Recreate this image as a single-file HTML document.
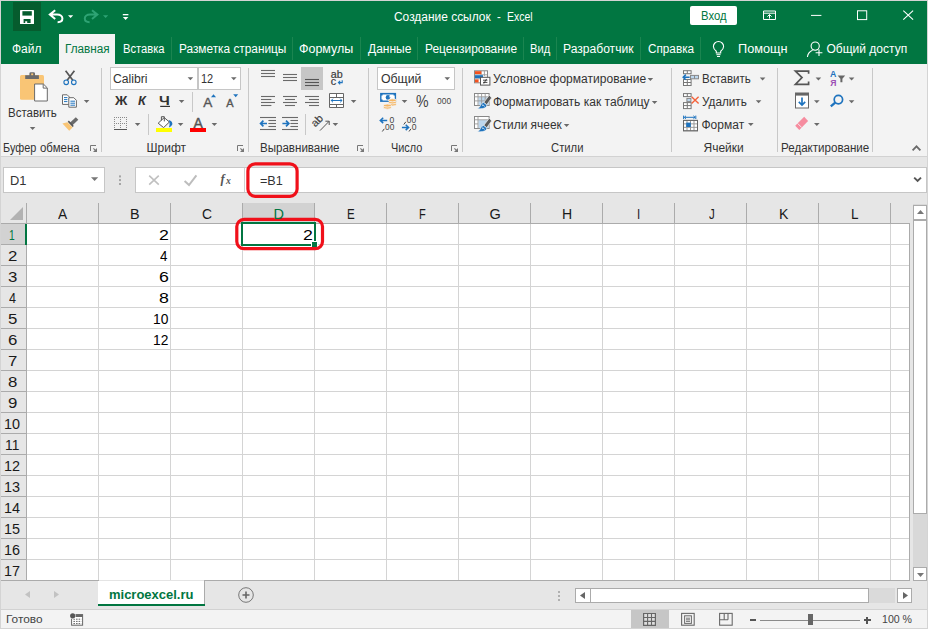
<!DOCTYPE html>
<html lang="ru"><head><meta charset="utf-8"><title>Создание ссылок - Excel</title>
<style>
html,body{margin:0;padding:0}
body{width:928px;height:629px;position:relative;overflow:hidden;background:#e6e6e6;font-family:'Liberation Sans',sans-serif}
div,span,svg{position:absolute;box-sizing:border-box}
span{white-space:pre;line-height:30px;transform-origin:0 0}
svg{overflow:visible}
</style></head>
<body>
<div style="left:0px;top:0px;width:928px;height:629px;background:#d4d4d4;"></div>
<div style="left:1px;top:1px;width:926px;height:627px;background:#e6e6e6;"></div>
<div style="left:1px;top:1px;width:926px;height:63px;background:#017641;"></div>
<div style="left:13px;top:2px;width:28px;height:29px;background:#065c2e;"></div>
<div style="left:59px;top:34px;width:56px;height:30px;background:#f3f3f3;"></div>
<div style="left:1px;top:64px;width:926px;height:92px;background:#f3f3f3;"></div>
<div style="left:1px;top:156px;width:926px;height:1px;background:#d2d2d2;"></div>
<div style="left:171px;top:37px;width:1px;height:23px;background:#1b8550;"></div>
<div style="left:292px;top:37px;width:1px;height:23px;background:#1b8550;"></div>
<div style="left:360px;top:37px;width:1px;height:23px;background:#1b8550;"></div>
<div style="left:417px;top:37px;width:1px;height:23px;background:#1b8550;"></div>
<div style="left:523px;top:37px;width:1px;height:23px;background:#1b8550;"></div>
<div style="left:556px;top:37px;width:1px;height:23px;background:#1b8550;"></div>
<div style="left:640px;top:37px;width:1px;height:23px;background:#1b8550;"></div>
<div style="left:700px;top:37px;width:1px;height:23px;background:#1b8550;"></div>
<div style="left:690px;top:6px;width:47px;height:19px;background:#ffffff;border-radius:2px;"></div>
<div style="left:101px;top:68px;width:1px;height:84px;background:#c8c8c8;"></div>
<div style="left:248px;top:68px;width:1px;height:84px;background:#c8c8c8;"></div>
<div style="left:368px;top:68px;width:1px;height:84px;background:#c8c8c8;"></div>
<div style="left:462px;top:68px;width:1px;height:84px;background:#c8c8c8;"></div>
<div style="left:671px;top:68px;width:1px;height:84px;background:#c8c8c8;"></div>
<div style="left:777px;top:68px;width:1px;height:84px;background:#c8c8c8;"></div>
<div style="left:872px;top:68px;width:1px;height:84px;background:#c8c8c8;"></div>
<div style="left:192px;top:92px;width:1px;height:20px;background:#c8c8c8;"></div>
<div style="left:148px;top:114px;width:1px;height:21px;background:#c8c8c8;"></div>
<div style="left:305px;top:114px;width:1px;height:21px;background:#c8c8c8;"></div>
<div style="left:110px;top:67px;width:88px;height:22.5px;background:#fff;border:1px solid #c6c6c6;"></div>
<div style="left:198px;top:67px;width:43px;height:22.5px;background:#fff;border:1px solid #c6c6c6;border-left:1px solid #c6c6c6;"></div>
<div style="left:377px;top:67px;width:78px;height:22.5px;background:#fff;border:1px solid #c6c6c6;"></div>
<div style="left:301px;top:67px;width:22px;height:22.5px;background:#c6c6c6;"></div>
<div style="left:3px;top:167px;width:102px;height:26px;background:#fff;border:1px solid #c6c6c6;"></div>
<div style="left:135px;top:167px;width:792px;height:26px;background:#fff;border:1px solid #c6c6c6;"></div>
<div style="left:244px;top:168px;width:1px;height:24px;background:#d0d0d0;"></div>
<div style="left:26px;top:224px;width:884px;height:357px;background:#fff;"></div>
<div style="left:243px;top:203px;width:71px;height:20px;background:#d2d2d2;"></div>
<div style="left:1px;top:224px;width:25px;height:20px;background:#d2d2d2;"></div>
<div style="left:98px;top:224px;width:1px;height:357px;background:#d4d4d4;"></div>
<div style="left:170px;top:224px;width:1px;height:357px;background:#d4d4d4;"></div>
<div style="left:242px;top:224px;width:1px;height:357px;background:#d4d4d4;"></div>
<div style="left:314px;top:224px;width:1px;height:357px;background:#d4d4d4;"></div>
<div style="left:386px;top:224px;width:1px;height:357px;background:#d4d4d4;"></div>
<div style="left:458px;top:224px;width:1px;height:357px;background:#d4d4d4;"></div>
<div style="left:530px;top:224px;width:1px;height:357px;background:#d4d4d4;"></div>
<div style="left:602px;top:224px;width:1px;height:357px;background:#d4d4d4;"></div>
<div style="left:674px;top:224px;width:1px;height:357px;background:#d4d4d4;"></div>
<div style="left:746px;top:224px;width:1px;height:357px;background:#d4d4d4;"></div>
<div style="left:818px;top:224px;width:1px;height:357px;background:#d4d4d4;"></div>
<div style="left:890px;top:224px;width:1px;height:357px;background:#d4d4d4;"></div>
<div style="left:27px;top:244px;width:883px;height:1px;background:#d4d4d4;"></div>
<div style="left:27px;top:265px;width:883px;height:1px;background:#d4d4d4;"></div>
<div style="left:27px;top:286px;width:883px;height:1px;background:#d4d4d4;"></div>
<div style="left:27px;top:307px;width:883px;height:1px;background:#d4d4d4;"></div>
<div style="left:27px;top:328px;width:883px;height:1px;background:#d4d4d4;"></div>
<div style="left:27px;top:349px;width:883px;height:1px;background:#d4d4d4;"></div>
<div style="left:27px;top:370px;width:883px;height:1px;background:#d4d4d4;"></div>
<div style="left:27px;top:391px;width:883px;height:1px;background:#d4d4d4;"></div>
<div style="left:27px;top:412px;width:883px;height:1px;background:#d4d4d4;"></div>
<div style="left:27px;top:433px;width:883px;height:1px;background:#d4d4d4;"></div>
<div style="left:27px;top:454px;width:883px;height:1px;background:#d4d4d4;"></div>
<div style="left:27px;top:475px;width:883px;height:1px;background:#d4d4d4;"></div>
<div style="left:27px;top:496px;width:883px;height:1px;background:#d4d4d4;"></div>
<div style="left:27px;top:517px;width:883px;height:1px;background:#d4d4d4;"></div>
<div style="left:27px;top:538px;width:883px;height:1px;background:#d4d4d4;"></div>
<div style="left:27px;top:559px;width:883px;height:1px;background:#d4d4d4;"></div>
<div style="left:26px;top:203px;width:1px;height:20px;background:#ababab;"></div>
<div style="left:98px;top:203px;width:1px;height:20px;background:#ababab;"></div>
<div style="left:170px;top:203px;width:1px;height:20px;background:#ababab;"></div>
<div style="left:242px;top:203px;width:1px;height:20px;background:#ababab;"></div>
<div style="left:314px;top:203px;width:1px;height:20px;background:#ababab;"></div>
<div style="left:386px;top:203px;width:1px;height:20px;background:#ababab;"></div>
<div style="left:458px;top:203px;width:1px;height:20px;background:#ababab;"></div>
<div style="left:530px;top:203px;width:1px;height:20px;background:#ababab;"></div>
<div style="left:602px;top:203px;width:1px;height:20px;background:#ababab;"></div>
<div style="left:674px;top:203px;width:1px;height:20px;background:#ababab;"></div>
<div style="left:746px;top:203px;width:1px;height:20px;background:#ababab;"></div>
<div style="left:818px;top:203px;width:1px;height:20px;background:#ababab;"></div>
<div style="left:890px;top:203px;width:1px;height:20px;background:#ababab;"></div>
<div style="left:1px;top:244px;width:25px;height:1px;background:#ababab;"></div>
<div style="left:1px;top:265px;width:25px;height:1px;background:#ababab;"></div>
<div style="left:1px;top:286px;width:25px;height:1px;background:#ababab;"></div>
<div style="left:1px;top:307px;width:25px;height:1px;background:#ababab;"></div>
<div style="left:1px;top:328px;width:25px;height:1px;background:#ababab;"></div>
<div style="left:1px;top:349px;width:25px;height:1px;background:#ababab;"></div>
<div style="left:1px;top:370px;width:25px;height:1px;background:#ababab;"></div>
<div style="left:1px;top:391px;width:25px;height:1px;background:#ababab;"></div>
<div style="left:1px;top:412px;width:25px;height:1px;background:#ababab;"></div>
<div style="left:1px;top:433px;width:25px;height:1px;background:#ababab;"></div>
<div style="left:1px;top:454px;width:25px;height:1px;background:#ababab;"></div>
<div style="left:1px;top:475px;width:25px;height:1px;background:#ababab;"></div>
<div style="left:1px;top:496px;width:25px;height:1px;background:#ababab;"></div>
<div style="left:1px;top:517px;width:25px;height:1px;background:#ababab;"></div>
<div style="left:1px;top:538px;width:25px;height:1px;background:#ababab;"></div>
<div style="left:1px;top:559px;width:25px;height:1px;background:#ababab;"></div>
<div style="left:1px;top:223px;width:909px;height:1px;background:#ababab;"></div>
<div style="left:26px;top:223px;width:1px;height:358px;background:#ababab;"></div>
<div style="left:909px;top:223px;width:1px;height:358px;background:#ababab;"></div>
<div style="left:1px;top:580px;width:909px;height:1px;background:#ababab;"></div>
<div style="left:99px;top:580px;width:105px;height:1px;background:#e4e4e4;"></div>
<svg style="left:10px;top:207px" width="13" height="13"><path d="M13 0V13H0Z" fill="#b2b2b2"/></svg>
<div style="left:243px;top:222px;width:71px;height:2px;background:#017641;"></div>
<div style="left:25px;top:224px;width:2px;height:21px;background:#017641;"></div>
<div style="left:241px;top:222px;width:75px;height:24px;border:2px solid #017641;"></div>
<div style="left:311px;top:241px;width:7px;height:7px;background:#fff;"></div>
<div style="left:312px;top:242px;width:5px;height:5px;background:#017641;"></div>
<div style="left:913px;top:204px;width:14px;height:377px;background:#d8d8d8;"></div>
<div style="left:913px;top:205px;width:14px;height:15px;background:#fff;border:1px solid #ababab;"></div>
<div style="left:913px;top:220px;width:14px;height:294px;background:#fff;border:1px solid #ababab;"></div>
<div style="left:913px;top:567px;width:14px;height:14px;background:#fff;border:1px solid #ababab;"></div>
<svg style="left:917px;top:210px" width="7" height="4"><path d="M0 4L3.5 0L7 4Z" fill="#777"/></svg>
<svg style="left:917px;top:573px" width="7" height="4"><path d="M0 0L3.5 4L7 0Z" fill="#777"/></svg>
<div style="left:1px;top:581px;width:926px;height:28px;background:#e6e6e6;"></div>
<div style="left:98px;top:581px;width:107px;height:25px;background:#fff;"></div>
<div style="left:98px;top:604px;width:107px;height:2px;background:#017641;"></div>
<div style="left:204px;top:581px;width:1px;height:23px;background:#ababab;"></div>
<div style="left:1px;top:609px;width:926px;height:1px;background:#d2d2d2;"></div>
<svg style="left:25px;top:591px" width="5" height="7"><path d="M5 0V7L0 3.5Z" fill="#c2c2c2"/></svg>
<svg style="left:54px;top:591px" width="5" height="7"><path d="M0 0V7L5 3.5Z" fill="#c2c2c2"/></svg>
<svg style="left:238px;top:587px" width="16" height="16"><circle cx="8" cy="8" r="7.3" fill="none" stroke="#777" stroke-width="1"/><path d="M4.5 8H11.5M8 4.5V11.5" stroke="#666" stroke-width="1.6"/></svg>
<div style="left:558px;top:591px;width:2px;height:2px;background:#b0b0b0;"></div>
<div style="left:558px;top:595px;width:2px;height:2px;background:#b0b0b0;"></div>
<div style="left:558px;top:599px;width:2px;height:2px;background:#b0b0b0;"></div>
<div style="left:575px;top:588px;width:16px;height:15px;background:#fff;border:1px solid #ababab;"></div>
<div style="left:590px;top:588px;width:279px;height:15px;background:#fff;border:1px solid #ababab;"></div>
<div style="left:897px;top:588px;width:15px;height:15px;background:#fff;border:1px solid #ababab;"></div>
<div style="left:869px;top:588px;width:26px;height:15px;background:#dadada;"></div>
<svg style="left:580px;top:592px" width="5" height="7"><path d="M5 0V7L0 3.5Z" fill="#666"/></svg>
<svg style="left:902.5px;top:592px" width="5" height="7"><path d="M0 0V7L5 3.5Z" fill="#666"/></svg>
<div style="left:1px;top:610px;width:926px;height:18px;background:#f3f3f3;"></div>
<div style="left:631px;top:609.5px;width:38px;height:18.5px;background:#c6c6c6;"></div>
<div style="left:760px;top:620px;width:100px;height:1px;background:#8a8a8a;"></div>
<div style="left:808px;top:614px;width:5px;height:11px;background:#666;"></div>
<div style="left:750px;top:619px;width:6px;height:2px;background:#555;"></div>
<div style="left:863.5px;top:619px;width:7px;height:2px;background:#555;"></div>
<div style="left:866px;top:616.5px;width:2px;height:7px;background:#555;"></div>
<svg style="left:0;top:0" width="928" height="629" viewBox="0 0 928 629"><rect x="20" y="10" width="14" height="14" rx="0.6" fill="#fff"/><rect x="22.4" y="11.2" width="9.4" height="4.4" fill="#065c2e"/><path d="M23.6 19H30.6V23H27.2V21.2H25.2V23H23.6Z" fill="#065c2e"/><path d="M55.2 10.2L49.8 14.6L55.2 19 M50 14.6H57 C60.6 14.6 62.4 16.6 62.4 18.6 C62.4 20.6 60.6 22.2 57.6 22.2" fill="none" stroke="#fff" stroke-width="2" stroke-linejoin="miter"/><path d="M68 15.2H73.2L70.6 18Z" fill="#fff"/><path d="M92 10.2L97.4 14.6L92 19 M97.2 14.6H90.2 C86.6 14.6 84.8 16.6 84.8 18.6 C84.8 20.6 86.6 22.2 89.6 22.2" fill="none" stroke="#2ea374" stroke-width="2"/><path d="M103 15.2H108.2L105.6 18Z" fill="#2ea374"/><rect x="122.8" y="14" width="5.6" height="1.3" fill="#fff"/><path d="M122.8 17H128.4L125.6 20Z" fill="#fff"/><path d="M763.5 11H775.5V19.5H763.5Z M763.5 13.2H775.5" fill="none" stroke="#fff" stroke-width="1"/><path d="M769.5 18.6V14.6 M767.4 16.6L769.5 14.5L771.6 16.6" fill="none" stroke="#fff" stroke-width="1"/><rect x="811" y="14.9" width="10.4" height="1" fill="#fff"/><rect x="857.5" y="10.8" width="9.2" height="8.8" fill="none" stroke="#fff" stroke-width="1"/><path d="M903.3 10.6L913.1 19.7 M913.1 10.6L903.3 19.7" stroke="#fff" stroke-width="1.1"/><path d="M716.3 53V51.2C714.6 50 713.4 48.6 713.4 46.6A5.1 5.1 0 0 1 723.6 46.6C723.6 48.6 722.4 50 720.7 51.2V53Z" fill="none" stroke="#fff" stroke-width="1.1"/><path d="M716.4 54.7H720.6 M717 56.5H720" stroke="#fff" stroke-width="1"/><circle cx="815.2" cy="46.1" r="4.1" fill="none" stroke="#fff" stroke-width="1.1"/><path d="M807.4 57C807.8 53.6 809.8 51.4 812.6 50.2" fill="none" stroke="#fff" stroke-width="1.1"/><path d="M815.6 52.7H822.4 M819 49.4V56" stroke="#fff" stroke-width="1.1"/><rect x="20" y="75" width="24" height="24.8" rx="1.5" fill="#f9c575"/><path d="M25.2 79V75.3H29.4V73.6Q29.4 72.2 30.8 72.2H33.6Q35 72.2 35 73.6V75.3H38.9V79Z" fill="#6a6a6a"/><rect x="31.2" y="73.4" width="2" height="1.8" fill="#f9c575"/><path d="M34.6 84H43.4L47.3 87.9V101H34.6Z" fill="#fff" stroke="#6a6a6a" stroke-width="1"/><path d="M43.2 84.2V88.1H47.1" fill="none" stroke="#6a6a6a" stroke-width="1"/><path d="M29.8 127h5.6l-2.8 3z" fill="#6a6a6a"/><path d="M65.6 70.8L73 80.4 M74.4 70.8L67 80.4" stroke="#555" stroke-width="1.7"/><circle cx="66.2" cy="82.3" r="2.3" fill="none" stroke="#1e73be" stroke-width="1.1"/><circle cx="73.8" cy="82.3" r="2.3" fill="none" stroke="#1e73be" stroke-width="1.1"/><path d="M62.5 94.8H67.2L69.4 97V104.4H62.5Z" fill="#fff" stroke="#6a6a6a" stroke-width="1"/><path d="M68.8 97.7H73.8L76.4 100.3V107.2H68.8Z" fill="#fff" stroke="#6a6a6a" stroke-width="1"/><path d="M64 97.6H67.4" stroke="#1e73be" stroke-width="1"/><path d="M64 99.6H67.4" stroke="#1e73be" stroke-width="1"/><path d="M64 101.6H67.4" stroke="#1e73be" stroke-width="1"/><path d="M70.4 101.2H75" stroke="#1e73be" stroke-width="1"/><path d="M70.4 103.2H75" stroke="#1e73be" stroke-width="1"/><path d="M70.4 105.2H75" stroke="#1e73be" stroke-width="1"/><path d="M83.8 100h5.6l-2.8 3z" fill="#6a6a6a"/><path d="M75.8 117.2L78.3 119.7L72.2 125.4L69.6 122.9Z" fill="#6a6a6a"/><path d="M68.9 120.6L73.8 125.9 L72.6 127.1 L67.7 121.8Z" fill="#555"/><path d="M62.4 123.4L67.4 122.2L72.6 127.4L69.2 130.8Z" fill="#f9c575"/><path d="M90.5 151V145.5H96" fill="none" stroke="#777" stroke-width="1"/><path d="M97 148v4h-4z" fill="#777"/><path d="M93.4 148.4l2.6 2.6" stroke="#777" stroke-width="1.1"/><path d="M187.6 77.2h5.6l-2.8 3z" fill="#6a6a6a"/><path d="M231 77.2h5.6l-2.8 3z" fill="#6a6a6a"/><path d="M160.2 106.4H170" stroke="#333" stroke-width="1.2"/><path d="M178.8 100h5.6l-2.8 3z" fill="#6a6a6a"/><text x="203.2" y="106.8" font-size="13.6" fill="#555" stroke="#555" stroke-width="0.35" font-family="Liberation Sans,sans-serif">A</text><path d="M211 97.2h5l-2.5-3z" fill="#1e73be"/><text x="226.2" y="106.8" font-size="11" fill="#555" stroke="#555" stroke-width="0.35" font-family="Liberation Sans,sans-serif">A</text><path d="M233.2 94.2h5l-2.5 3z" fill="#1e73be"/><path d="M114 117.5H127" stroke="#8a8a8a" stroke-width="1" stroke-dasharray="1 1"/><path d="M114 123.5H127" stroke="#8a8a8a" stroke-width="1" stroke-dasharray="1 1"/><path d="M114.5 117V129" stroke="#8a8a8a" stroke-width="1" stroke-dasharray="1 1"/><path d="M120.5 117V129" stroke="#8a8a8a" stroke-width="1" stroke-dasharray="1 1"/><path d="M126.5 117V129" stroke="#8a8a8a" stroke-width="1" stroke-dasharray="1 1"/><path d="M114 129.5H127" stroke="#555" stroke-width="1"/><path d="M134.8 123h5.6l-2.8 3z" fill="#6a6a6a"/><path d="M164.2 117.6L169.4 122L163.6 127.6L158.2 123.2Z" fill="#fff" stroke="#555" stroke-width="1"/><path d="M161.4 120.4V116.7H164.3V121.4" fill="none" stroke="#555" stroke-width="1"/><path d="M168.6 119.9Q173 121.2 172.3 124.6Q171.5 126.9 168.9 127.4Q169.9 125 169.5 123Q169.3 121.4 168.6 119.9Z" fill="#1e73be"/><rect x="156" y="128" width="16" height="4" fill="#ffff00"/><path d="M177.8 123h5.6l-2.8 3z" fill="#6a6a6a"/><text x="193.6" y="127.9" font-size="14" fill="#555" stroke="#555" stroke-width="0.4" font-family="Liberation Sans,sans-serif">A</text><rect x="190" y="128" width="16" height="4" fill="#ff0000"/><path d="M211.6 123h5.6l-2.8 3z" fill="#6a6a6a"/><path d="M237.5 151V145.5H243" fill="none" stroke="#777" stroke-width="1"/><path d="M244 148v4h-4z" fill="#777"/><path d="M240.4 148.4l2.6 2.6" stroke="#777" stroke-width="1.1"/><path d="M261 70.5H275" stroke="#6a6a6a" stroke-width="1.1"/><path d="M261 73.5H275" stroke="#6a6a6a" stroke-width="1.1"/><path d="M261 76.5H275" stroke="#6a6a6a" stroke-width="1.1"/><path d="M283 74.5H297" stroke="#6a6a6a" stroke-width="1.1"/><path d="M283 77.5H297" stroke="#6a6a6a" stroke-width="1.1"/><path d="M283 80.5H297" stroke="#6a6a6a" stroke-width="1.1"/><path d="M305 79.5H319" stroke="#555" stroke-width="1.1"/><path d="M305 82.5H319" stroke="#555" stroke-width="1.1"/><path d="M305 85.5H319" stroke="#555" stroke-width="1.1"/><path d="M261 96.5H275" stroke="#6a6a6a" stroke-width="1.1"/><path d="M283 96.5H297" stroke="#6a6a6a" stroke-width="1.1"/><path d="M305 96.5H319" stroke="#6a6a6a" stroke-width="1.1"/><path d="M261 99.5H271.4" stroke="#6a6a6a" stroke-width="1.1"/><path d="M285 99.5H295" stroke="#6a6a6a" stroke-width="1.1"/><path d="M309 99.5H319" stroke="#6a6a6a" stroke-width="1.1"/><path d="M261 102.5H275" stroke="#6a6a6a" stroke-width="1.1"/><path d="M283 102.5H297" stroke="#6a6a6a" stroke-width="1.1"/><path d="M305 102.5H319" stroke="#6a6a6a" stroke-width="1.1"/><path d="M261 105.5H271.4" stroke="#6a6a6a" stroke-width="1.1"/><path d="M285 105.5H295" stroke="#6a6a6a" stroke-width="1.1"/><path d="M309 105.5H319" stroke="#6a6a6a" stroke-width="1.1"/><text x="330.8" y="77.8" font-size="10.8" fill="#3a3a3a" stroke="#3a3a3a" stroke-width="0.2" font-family="Liberation Sans,sans-serif" textLength="11.9" lengthAdjust="spacingAndGlyphs">ab</text><text x="330.8" y="84.7" font-size="10.8" fill="#3a3a3a" stroke="#3a3a3a" stroke-width="0.2" font-family="Liberation Sans,sans-serif" textLength="5.4" lengthAdjust="spacingAndGlyphs">c</text><path d="M342.2 80.2V82.6H338.6 M340.2 80.8L338.4 82.6L340.2 84.4" fill="none" stroke="#1e73be" stroke-width="1.1"/><path d="M329.5 93.5H343.5V107.5H329.5Z M329.5 97.5H343.5 M329.5 104.5H343.5 M336.5 93.5V97.5 M336.5 104.5V107.5" fill="#fff" stroke="#666" stroke-width="1"/><path d="M331.2 100.5H342 M333 98.7L331.2 100.5L333 102.3 M340.2 98.7L342 100.5L340.2 102.3" fill="none" stroke="#1e73be" stroke-width="1"/><path d="M350.8 100h5.6l-2.8 3z" fill="#6a6a6a"/><path d="M260 117.5H276" stroke="#6a6a6a" stroke-width="1.1"/><path d="M282 117.5H298" stroke="#6a6a6a" stroke-width="1.1"/><path d="M268.4 120.5H276" stroke="#6a6a6a" stroke-width="1.1"/><path d="M290.4 120.5H298" stroke="#6a6a6a" stroke-width="1.1"/><path d="M268.4 123.5H276" stroke="#6a6a6a" stroke-width="1.1"/><path d="M290.4 123.5H298" stroke="#6a6a6a" stroke-width="1.1"/><path d="M268.4 126.5H276" stroke="#6a6a6a" stroke-width="1.1"/><path d="M290.4 126.5H298" stroke="#6a6a6a" stroke-width="1.1"/><path d="M260 129.5H276" stroke="#6a6a6a" stroke-width="1.1"/><path d="M282 129.5H298" stroke="#6a6a6a" stroke-width="1.1"/><path d="M260.6 123.5H267 M263.4 120.7L260.6 123.5L263.4 126.3" fill="none" stroke="#1e73be" stroke-width="1.7"/><path d="M282.4 123.5H288.8 M286 120.7L288.8 123.5L286 126.3" fill="none" stroke="#1e73be" stroke-width="1.7"/><text transform="translate(315.2 127.4) rotate(-45)" font-size="10.8" fill="#444" stroke="#444" stroke-width="0.2" font-family="Liberation Sans,sans-serif">ab</text><path d="M320 130.6L329 121.4 M325.4 121.2H329.2V125" fill="none" stroke="#555" stroke-width="1"/><path d="M332.6 123h5.6l-2.8 3z" fill="#6a6a6a"/><path d="M357.5 151V145.5H363" fill="none" stroke="#777" stroke-width="1"/><path d="M364 148v4h-4z" fill="#777"/><path d="M360.4 148.4l2.6 2.6" stroke="#777" stroke-width="1.1"/><path d="M444.5 77.3h5.6l-2.8 3z" fill="#6a6a6a"/><rect x="380.1" y="92.9" width="16" height="9" fill="#1e73be"/><path d="M382.6 94.4H393.6V95.4H394.7V99.4H393.6V100.4H382.6V99.4H381.5V95.4H382.6Z" fill="#fff"/><circle cx="388" cy="97.4" r="2.3" fill="#1e73be"/><path d="M388.6 97.2L390.6 95.4L390.6 97.2Z" fill="#fff"/><ellipse cx="392.4" cy="104.5" rx="3.9" ry="1.55" fill="#f6b765" stroke="#f3f3f3" stroke-width="0.9"/><ellipse cx="392.4" cy="102.4" rx="3.9" ry="1.55" fill="#f6b765" stroke="#f3f3f3" stroke-width="0.9"/><ellipse cx="392.4" cy="100.3" rx="3.9" ry="1.55" fill="#f6b765" stroke="#f3f3f3" stroke-width="0.9"/><ellipse cx="387.4" cy="107.6" rx="3.9" ry="1.55" fill="#f6b765" stroke="#f3f3f3" stroke-width="0.9"/><ellipse cx="387.4" cy="105.5" rx="3.9" ry="1.55" fill="#f6b765" stroke="#f3f3f3" stroke-width="0.9"/><path d="M401.7 100h5.6l-2.8 3z" fill="#6a6a6a"/><text x="389.6" y="122.9" font-size="8.6" font-family="Liberation Sans,sans-serif" fill="#444">0</text><text x="385" y="130" font-size="8.6" font-family="Liberation Sans,sans-serif" fill="#444" textLength="9.3" lengthAdjust="spacingAndGlyphs">00</text><path d="M384.3 128.8L382.3 131.5" stroke="#444" stroke-width="1"/><path d="M380.3 120.4H387.2 M383.2 117.7L380.3 120.4L383.2 123.1" fill="none" stroke="#1e73be" stroke-width="1.5"/><text x="406.8" y="122.9" font-size="8.6" font-family="Liberation Sans,sans-serif" fill="#444" textLength="9.3" lengthAdjust="spacingAndGlyphs">00</text><path d="M405.8 121.8L403.8 124.5" stroke="#444" stroke-width="1"/><text x="411.8" y="130" font-size="8.6" font-family="Liberation Sans,sans-serif" fill="#444">0</text><path d="M411 128.8L409 131.5" stroke="#444" stroke-width="1"/><path d="M401.9 127.4H408.6 M405.7 124.7L408.6 127.4L405.7 130.1" fill="none" stroke="#1e73be" stroke-width="1.5"/><path d="M451.5 151V145.5H457" fill="none" stroke="#777" stroke-width="1"/><path d="M458 148v4h-4z" fill="#777"/><path d="M454.4 148.4l2.6 2.6" stroke="#777" stroke-width="1.1"/><rect x="474.5" y="70.8" width="13" height="12" fill="#fff" stroke="#888" stroke-width="1"/><path d="M481 70.8V82.8 M484.4 70.8V76 M474.5 74.8H487.5 M474.5 78.8H481" stroke="#999" stroke-width="0.9" fill="none"/><rect x="475" y="71.2" width="6.4" height="2.8" fill="#f4511e"/><rect x="475" y="75.2" width="8" height="3" fill="#1e73be"/><rect x="475" y="79.4" width="3.6" height="3" fill="#f4511e"/><rect x="480.5" y="77.3" width="9.4" height="7.8" fill="#fff" stroke="#555" stroke-width="1"/><path d="M483 80.2H487.4 M483 82.4H487.4 M486.6 78.9L483.8 83.6" stroke="#333" stroke-width="0.9"/><rect x="474.5" y="93.5" width="14.6" height="12" fill="#fff" stroke="#888" stroke-width="1"/><rect x="478.4" y="97.1" width="10.2" height="8" fill="#bdd7ee"/><path d="M478 93.5V105.5 M481.6 93.5V105.5 M485.2 93.5V105.5 M474.5 96.8H489 M474.5 100.9H489" stroke="#999" stroke-width="0.9"/><path d="M489.4 95.1L491.6 97.9L486.8 104.7L483.8 102.3Z" fill="#5a5a5a" stroke="#f3f3f3" stroke-width="0.7"/><path d="M483.6 102.5L486.8 105.1Q486.6 108.1 482.4 108.5Q479.6 108.9 477.6 108.8Q480.2 106.9 480.8 104.9Q481.6 102.9 483.6 102.5Z" fill="#1e73be" stroke="#f3f3f3" stroke-width="0.6"/><path d="M482 105.1Q483.6 104.9 484.6 106.3" fill="none" stroke="#fff" stroke-width="0.9"/><rect x="474.5" y="116.5" width="14.6" height="12" fill="#fff" stroke="#888" stroke-width="1"/><rect x="478.4" y="120.1" width="10.2" height="8" fill="#bdd7ee"/><path d="M478 116.5V128.5 M474.5 119.8H489 M474.5 123.9H478" stroke="#999" stroke-width="0.9"/><path d="M489.4 118.1L491.6 120.9L486.8 127.7L483.8 125.3Z" fill="#5a5a5a" stroke="#f3f3f3" stroke-width="0.7"/><path d="M483.6 125.5L486.8 128.1Q486.6 131.1 482.4 131.5Q479.6 131.9 477.6 131.8Q480.2 129.9 480.8 127.9Q481.6 125.9 483.6 125.5Z" fill="#1e73be" stroke="#f3f3f3" stroke-width="0.6"/><path d="M482 128.1Q483.6 127.9 484.6 129.3" fill="none" stroke="#fff" stroke-width="0.9"/><path d="M647.6 78h5.6l-2.8 3z" fill="#6a6a6a"/><path d="M651.8 101h5.6l-2.8 3z" fill="#6a6a6a"/><path d="M563.8 124h5.6l-2.8 3z" fill="#6a6a6a"/><rect x="683.5" y="70.7" width="7.6" height="3" fill="#fff" stroke="#777" stroke-width="1"/><path d="M687.3 70.7V73.7" stroke="#777" stroke-width="1"/><rect x="683.5" y="79.5" width="7.6" height="6" fill="#fff" stroke="#777" stroke-width="1"/><path d="M687.3 79.5V85.5" stroke="#777" stroke-width="1"/><path d="M683.5 82.5H691.1" stroke="#777" stroke-width="1"/><rect x="690.5" y="75.4" width="8" height="3.4" fill="#bdd7ee" stroke="#888" stroke-width="1"/><path d="M694.5 75.4V78.8" stroke="#888" stroke-width="1"/><path d="M683.2 77.2H689.6 M685.8 74.6L683.2 77.2L685.8 79.8" fill="none" stroke="#1e73be" stroke-width="1.5"/><path d="M759.8 77.4h5.6l-2.8 3z" fill="#6a6a6a"/><rect x="683.5" y="93.6" width="7.6" height="3" fill="#fff" stroke="#777" stroke-width="1"/><path d="M687.3 93.6V96.6" stroke="#777" stroke-width="1"/><rect x="683.5" y="102.6" width="7.6" height="6" fill="#fff" stroke="#777" stroke-width="1"/><path d="M687.3 102.6V108.6" stroke="#777" stroke-width="1"/><path d="M683.5 105.6H691.1" stroke="#777" stroke-width="1"/><rect x="686.9" y="98.4" width="4" height="3.2" fill="#bdd7ee" stroke="#888" stroke-width="1"/><path d="M691.6 96.8L698.6 103.4 M698.6 96.8L691.6 103.4" stroke="#f4623a" stroke-width="1.4"/><path d="M755.8 100.2h5.6l-2.8 3z" fill="#6a6a6a"/><path d="M683.6 115.6V119 M695.8 115.6V119 M684.4 117.3H695 M686 115.8L684.4 117.3L686 118.8 M693.4 115.8L695 117.3L693.4 118.8" fill="none" stroke="#1e73be" stroke-width="1"/><rect x="683.5" y="120.4" width="14" height="10.4" fill="#fff" stroke="#999" stroke-width="1"/><path d="M687 120.4V130.8" stroke="#999" stroke-width="1"/><path d="M690.5 120.4V130.8" stroke="#999" stroke-width="1"/><path d="M694 120.4V130.8" stroke="#999" stroke-width="1"/><path d="M683.5 123.867H697.5" stroke="#999" stroke-width="1"/><path d="M683.5 127.333H697.5" stroke="#999" stroke-width="1"/><rect x="683.5" y="120.4" width="14" height="10.4" fill="none" stroke="#666" stroke-width="1"/><rect x="686.2" y="122.6" width="4.6" height="4.4" fill="#1e73be"/><path d="M748 123h5.6l-2.8 3z" fill="#6a6a6a"/><path d="M808.6 73.8V71.1H795.4L802 77.6L795.4 84.3H808.6V81.6" fill="none" stroke="#555" stroke-width="1.7" stroke-linejoin="miter"/><path d="M815.6 77.4h5.6l-2.8 3z" fill="#6a6a6a"/><rect x="795.5" y="93" width="13" height="15" fill="#fff" stroke="#666" stroke-width="1"/><rect x="795.5" y="93" width="13" height="2.6" fill="#666"/><path d="M802 97.6V105 M798.8 101.8L802 105L805.2 101.8" fill="none" stroke="#1e73be" stroke-width="1.7"/><path d="M814 100.2h5.6l-2.8 3z" fill="#6a6a6a"/><path d="M804.2 116.8L808.1 121.1L799.3 129.9L795.2 125.8Z" fill="#f68c9f"/><path d="M797.5 123.3L801.7 127.5" stroke="#f3f3f3" stroke-width="0.9"/><path d="M814 123h5.6l-2.8 3z" fill="#6a6a6a"/><text x="830" y="76.6" font-size="8.8" font-weight="bold" fill="#1e73be" font-family="Liberation Sans,sans-serif">A</text><text x="830.2" y="85.8" font-size="8.6" font-weight="bold" fill="#9b4fb5" font-family="Liberation Sans,sans-serif">Я</text><path d="M837.6 75.6H845.2L842.4 78.8V82.2H840.4V78.8Z" fill="#666"/><path d="M848.8 77.4h5.6l-2.8 3z" fill="#6a6a6a"/><circle cx="838.4" cy="99.6" r="4.2" fill="none" stroke="#1e73be" stroke-width="1.7"/><path d="M835.2 102.6L830.8 106.4" stroke="#1e73be" stroke-width="2.3"/><path d="M848.8 100.2h5.6l-2.8 3z" fill="#6a6a6a"/><path d="M912.6 150.4L916.5 146.4L920.4 150.4" fill="none" stroke="#6a6a6a" stroke-width="1.8"/><path d="M91 177.2h7.2l-3.6 3.7z" fill="#777"/><rect x="119" y="175.4" width="2" height="2" fill="#a6a6a6"/><rect x="119" y="179.1" width="2" height="2" fill="#a6a6a6"/><rect x="119" y="183" width="2" height="2" fill="#a6a6a6"/><path d="M149.2 175.6L158.8 184.6 M158.8 175.6L149.2 184.6" stroke="#c0c0c0" stroke-width="1.6"/><path d="M184.6 181L189 185L196.4 175.4" fill="none" stroke="#bdbdbd" stroke-width="2"/><text x="220.4" y="183.2" font-size="12.6" font-style="italic" font-weight="bold" fill="#555" font-family="Liberation Serif,serif">f</text><text x="226" y="183.6" font-size="9.6" font-style="italic" font-weight="bold" fill="#555" font-family="Liberation Serif,serif">x</text><path d="M914.2 177.6L917.6 181L921 177.6" fill="none" stroke="#555" stroke-width="1.9"/><rect x="71.6" y="614.6" width="11" height="10.6" fill="#fff" stroke="#666" stroke-width="1"/><rect x="71.6" y="614.6" width="11" height="2.4" fill="#666"/><path d="M73.4 619.2H81.4" stroke="#666" stroke-width="1" stroke-dasharray="1.6 1"/><path d="M73.4 621.4H81.4" stroke="#666" stroke-width="1" stroke-dasharray="1.6 1"/><path d="M73.4 623.6H81.4" stroke="#666" stroke-width="1" stroke-dasharray="1.6 1"/><circle cx="72.7" cy="615.8" r="3.1" fill="#f3f3f3"/><circle cx="72.7" cy="615.8" r="2.6" fill="#555"/><path d="M643.6 613.5H655.4V625.4H643.6Z" fill="#dedede" stroke="#666" stroke-width="1.2"/><path d="M647.6 613.5V625.4 M651.5 613.5V625.4 M643.6 617.5H655.4 M643.6 621.4H655.4" fill="none" stroke="#666" stroke-width="1.1"/><rect x="681.6" y="613.4" width="12.6" height="11.8" fill="none" stroke="#6a6a6a" stroke-width="1.1"/><rect x="684.6" y="615.8" width="6.8" height="7.6" fill="none" stroke="#6a6a6a" stroke-width="1"/><path d="M686 618.2H690 M686 619.8H690 M686 621.4H690" stroke="#6a6a6a" stroke-width="0.9"/><rect x="719.6" y="613.4" width="12.6" height="11.8" fill="none" stroke="#6a6a6a" stroke-width="1.1"/><path d="M724.2 613.4V619.8 M728 613.4V619.8 M719.6 619.8H728" fill="none" stroke="#6a6a6a" stroke-width="1.1"/><rect x="247.9" y="163.8" width="49.2" height="32.5" rx="7.2" fill="none" stroke="#f0101a" stroke-width="3.2"/><rect x="236.8" y="219.4" width="85.7" height="29.3" rx="7.2" fill="none" stroke="#f0101a" stroke-width="3.2"/></svg>
<span style="left:393.61px;top:2.00px;font-size:12px;color:#ffffff;transform:scaleX(0.9948);">Создание ссылок</span>
<span style="left:496.60px;top:2.00px;font-size:12px;color:#ffffff;transform:scaleX(0.9500);">-</span>
<span style="left:507.23px;top:2.00px;font-size:12px;color:#ffffff;transform:scaleX(0.8714);">Excel</span>
<span style="left:700.66px;top:1.00px;font-size:12px;color:#017641;transform:scaleX(0.9385);">Вход</span>
<span style="left:12.00px;top:34.00px;font-size:12px;color:#ffffff;transform:scaleX(1.0000);">Файл</span>
<span style="left:65.02px;top:34.00px;font-size:12px;color:#017641;transform:scaleX(0.9773);">Главная</span>
<span style="left:123.07px;top:34.00px;font-size:12px;color:#ffffff;transform:scaleX(0.9318);">Вставка</span>
<span style="left:179.01px;top:34.00px;font-size:12px;color:#ffffff;transform:scaleX(0.9860);">Разметка страницы</span>
<span style="left:299.46px;top:34.00px;font-size:12px;color:#ffffff;transform:scaleX(1.0392);">Формулы</span>
<span style="left:368.00px;top:34.00px;font-size:12px;color:#ffffff;transform:scaleX(1.0000);">Данные</span>
<span style="left:424.51px;top:34.00px;font-size:12px;color:#ffffff;transform:scaleX(0.9945);">Рецензирование</span>
<span style="left:529.57px;top:34.00px;font-size:12px;color:#ffffff;transform:scaleX(0.9286);">Вид</span>
<span style="left:563.49px;top:34.00px;font-size:12px;color:#ffffff;transform:scaleX(1.0072);">Разработчик</span>
<span style="left:647.52px;top:34.00px;font-size:12px;color:#ffffff;transform:scaleX(0.9783);">Справка</span>
<span style="left:738.24px;top:34.00px;font-size:12px;color:#ffffff;transform:scaleX(1.0600);">Помощн</span>
<span style="left:826.50px;top:34.00px;font-size:12px;color:#ffffff;transform:scaleX(1.0000);">Общий доступ</span>
<span style="left:7.64px;top:98.00px;font-size:12px;color:#333333;transform:scaleX(0.9592);">Вставить</span>
<span style="left:2.69px;top:133.00px;font-size:12px;color:#333333;transform:scaleX(0.9057);">Буфер</span>
<span style="left:40.30px;top:133.00px;font-size:12px;color:#333333;transform:scaleX(0.9537);">обмена</span>
<span style="left:112.98px;top:64.00px;font-size:12px;color:#333333;transform:scaleX(1.0156);">Calibri</span>
<span style="left:201.08px;top:64.00px;font-size:12px;color:#333333;transform:scaleX(0.9167);">12</span>
<span style="left:115.00px;top:86.00px;font-size:12px;color:#333333;font-weight:bold;transform:scaleX(1.1364);">Ж</span>
<span style="left:138.00px;top:86.00px;font-size:12px;color:#333333;font-weight:bold;font-style:italic;transform:scaleX(1.0625);">К</span>
<span style="left:159.11px;top:86.00px;font-size:12px;color:#333333;font-weight:bold;transform:scaleX(1.2857);">Ч</span>
<span style="left:146.50px;top:133.00px;font-size:12px;color:#333333;transform:scaleX(1.0000);">Шрифт</span>
<span style="left:260.04px;top:133.00px;font-size:12px;color:#333333;transform:scaleX(0.9630);">Выравнивание</span>
<span style="left:381.00px;top:64.00px;font-size:12px;color:#333333;transform:scaleX(1.0256);">Общий</span>
<span style="left:415.69px;top:87.00px;font-size:15.6px;color:#444;transform:scaleX(0.9077);">%</span>
<span style="left:437.00px;top:86.00px;font-size:9.5px;color:#444;transform:scaleX(0.8875);">000</span>
<span style="left:391.09px;top:133.00px;font-size:12px;color:#333333;transform:scaleX(0.9091);">Число</span>
<span style="left:492.50px;top:64.00px;font-size:12px;color:#333333;transform:scaleX(1.0033);">Условное форматирование</span>
<span style="left:492.50px;top:87.00px;font-size:12px;color:#333333;transform:scaleX(1.0032);">Форматировать как таблицу</span>
<span style="left:492.51px;top:110.00px;font-size:12px;color:#333333;transform:scaleX(0.9926);">Стили ячеек</span>
<span style="left:550.56px;top:133.00px;font-size:12px;color:#333333;transform:scaleX(0.9394);">Стили</span>
<span style="left:701.54px;top:64.00px;font-size:12px;color:#333333;transform:scaleX(0.9592);">Вставить</span>
<span style="left:701.52px;top:87.00px;font-size:12px;color:#333333;transform:scaleX(0.9773);">Удалить</span>
<span style="left:701.50px;top:110.00px;font-size:12px;color:#333333;transform:scaleX(1.0000);">Формат</span>
<span style="left:703.50px;top:133.00px;font-size:12px;color:#333333;transform:scaleX(1.0000);">Ячейки</span>
<span style="left:780.73px;top:133.00px;font-size:12px;color:#333333;transform:scaleX(0.9656);">Редактирование</span>
<span style="left:9.93px;top:166.00px;font-size:12px;color:#333333;transform:scaleX(1.0714);">D1</span>
<span style="left:259.95px;top:166.00px;font-size:12px;color:#333333;transform:scaleX(1.0500);">=B1</span>
<span style="left:58.25px;top:199.00px;font-size:14.5px;color:#1a1a1a;transform:scaleX(0.9500);">A</span>
<span style="left:130.06px;top:199.00px;font-size:14.5px;color:#1a1a1a;transform:scaleX(0.9875);">B</span>
<span style="left:201.74px;top:199.00px;font-size:14.5px;color:#1a1a1a;transform:scaleX(0.9556);">C</span>
<span style="left:273.50px;top:199.00px;font-size:14.5px;color:#017641;transform:scaleX(1.0000);">D</span>
<span style="left:347.00px;top:199.00px;font-size:14.5px;color:#1a1a1a;transform:scaleX(0.8000);">E</span>
<span style="left:419.19px;top:199.00px;font-size:14.5px;color:#1a1a1a;transform:scaleX(0.7625);">F</span>
<span style="left:489.50px;top:199.00px;font-size:14.5px;color:#1a1a1a;transform:scaleX(1.0000);">G</span>
<span style="left:561.68px;top:199.00px;font-size:14.5px;color:#1a1a1a;transform:scaleX(0.9667);">H</span>
<span style="left:637.40px;top:199.00px;font-size:14.5px;color:#1a1a1a;transform:scaleX(0.8000);">I</span>
<span style="left:708.60px;top:199.00px;font-size:14.5px;color:#1a1a1a;transform:scaleX(0.8000);">J</span>
<span style="left:778.62px;top:199.00px;font-size:14.5px;color:#1a1a1a;transform:scaleX(0.9750);">K</span>
<span style="left:850.82px;top:199.00px;font-size:14.5px;color:#1a1a1a;transform:scaleX(0.9286);">L</span>
<span style="left:9.07px;top:220.00px;font-size:14px;color:#017641;transform:scaleX(0.7333);">1</span>
<span style="left:7.50px;top:241.00px;font-size:14px;color:#1a1a1a;transform:scaleX(1.2000);">2</span>
<span style="left:7.50px;top:262.00px;font-size:14px;color:#1a1a1a;transform:scaleX(1.2000);">3</span>
<span style="left:8.70px;top:283.00px;font-size:14px;color:#1a1a1a;transform:scaleX(0.9000);">4</span>
<span style="left:7.50px;top:304.00px;font-size:14px;color:#1a1a1a;transform:scaleX(1.2000);">5</span>
<span style="left:7.50px;top:325.00px;font-size:14px;color:#1a1a1a;transform:scaleX(1.2000);">6</span>
<span style="left:7.50px;top:346.00px;font-size:14px;color:#1a1a1a;transform:scaleX(1.2000);">7</span>
<span style="left:7.50px;top:367.00px;font-size:14px;color:#1a1a1a;transform:scaleX(1.2000);">8</span>
<span style="left:7.50px;top:388.00px;font-size:14px;color:#1a1a1a;transform:scaleX(1.2000);">9</span>
<span style="left:4.47px;top:409.00px;font-size:14px;color:#1a1a1a;transform:scaleX(1.0286);">10</span>
<span style="left:4.52px;top:430.00px;font-size:14px;color:#1a1a1a;transform:scaleX(0.9846);">11</span>
<span style="left:4.47px;top:451.00px;font-size:14px;color:#1a1a1a;transform:scaleX(1.0286);">12</span>
<span style="left:4.47px;top:472.00px;font-size:14px;color:#1a1a1a;transform:scaleX(1.0286);">13</span>
<span style="left:4.47px;top:493.00px;font-size:14px;color:#1a1a1a;transform:scaleX(1.0286);">14</span>
<span style="left:4.47px;top:514.00px;font-size:14px;color:#1a1a1a;transform:scaleX(1.0286);">15</span>
<span style="left:4.47px;top:535.00px;font-size:14px;color:#1a1a1a;transform:scaleX(1.0286);">16</span>
<span style="left:4.47px;top:556.00px;font-size:14px;color:#1a1a1a;transform:scaleX(1.0286);">17</span>
<span style="left:158.93px;top:220.00px;font-size:14px;color:#000;transform:scaleX(1.2667);">2</span>
<span style="left:160.20px;top:241.00px;font-size:14px;color:#000;transform:scaleX(0.9500);">4</span>
<span style="left:158.93px;top:262.00px;font-size:14px;color:#000;transform:scaleX(1.2667);">6</span>
<span style="left:158.93px;top:283.00px;font-size:14px;color:#000;transform:scaleX(1.2667);">8</span>
<span style="left:153.01px;top:304.00px;font-size:14px;color:#000;transform:scaleX(0.9857);">10</span>
<span style="left:153.01px;top:325.00px;font-size:14px;color:#000;transform:scaleX(0.9857);">12</span>
<span style="left:303.13px;top:220.00px;font-size:14px;color:#000;transform:scaleX(1.2667);">2</span>
<span style="left:109.32px;top:580.00px;font-size:12px;color:#017641;font-weight:bold;transform:scaleX(1.0816);">microexcel.ru</span>
<span style="left:5.69px;top:604.00px;font-size:10.7px;color:#444;transform:scaleX(1.1063);">Готово</span>
<span style="left:882.01px;top:604.00px;font-size:10.7px;color:#444;transform:scaleX(0.9897);">100 %</span>
</body></html>
